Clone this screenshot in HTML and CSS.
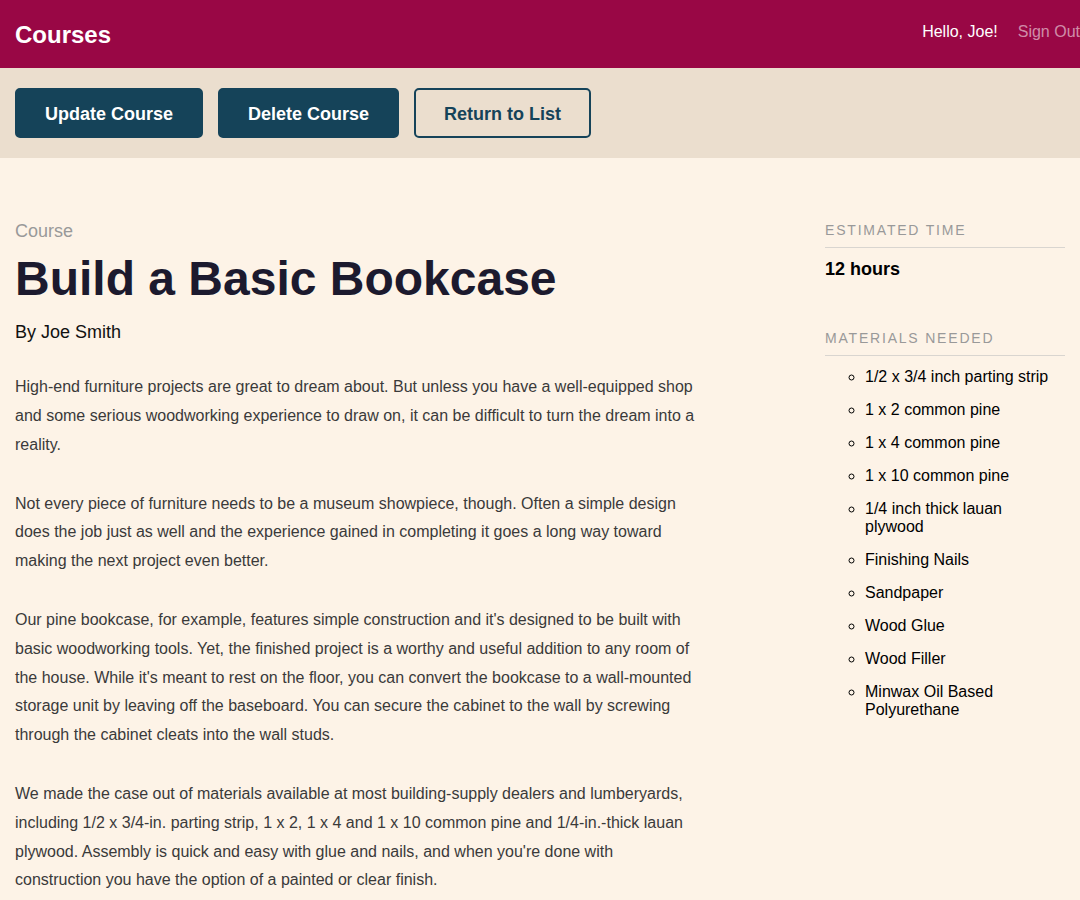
FILE: index.html
```html
<!DOCTYPE html>
<html>
<head>
<meta charset="utf-8">
<title>Courses</title>
<link rel="stylesheet" href="styles.css">
</head>
<body>
<header class="header">
  <div class="header-bar">
    <h1 class="logo">Courses</h1>
    <nav class="nav">
      <span class="greeting">Hello, Joe!</span>
      <a class="signout" href="#">Sign Out</a>
    </nav>
  </div>
</header>
<div class="actions">
  <div class="actions-bar">
    <a class="button" href="#">Update Course</a>
    <a class="button" href="#">Delete Course</a>
    <a class="button button-secondary" href="#">Return to List</a>
  </div>
</div>
<main class="course">
  <div class="course-main">
    <p class="course-label">Course</p>
    <h2 class="course-title">Build a Basic Bookcase</h2>
    <p class="course-author">By Joe Smith</p>
    <div class="course-body">
      <p>High-end furniture projects are great to dream about. But unless you have a well-equipped shop and some serious woodworking experience to draw on, it can be difficult to turn the dream into a reality.</p>
      <p>Not every piece of furniture needs to be a museum showpiece, though. Often a simple design does the job just as well and the experience gained in completing it goes a long way toward making the next project even better.</p>
      <p>Our pine bookcase, for example, features simple construction and it's designed to be built with basic woodworking tools. Yet, the finished project is a worthy and useful addition to any room of the house. While it's meant to rest on the floor, you can convert the bookcase to a wall-mounted storage unit by leaving off the baseboard. You can secure the cabinet to the wall by screwing through the cabinet cleats into the wall studs.</p>
      <p>We made the case out of materials available at most building-supply dealers and lumberyards, including 1/2 x 3/4-in. parting strip, 1 x 2, 1 x 4 and 1 x 10 common pine and 1/4-in.-thick lauan plywood. Assembly is quick and easy with glue and nails, and when you're done with construction you have the option of a painted or clear finish.</p>
    </div>
  </div>
  <aside class="course-side">
    <section class="side-block">
      <h4 class="side-heading">Estimated Time</h4>
      <h3 class="side-time">12 hours</h3>
    </section>
    <section class="side-block">
      <h4 class="side-heading">Materials Needed</h4>
      <ul class="materials">
        <li>1/2 x 3/4 inch parting strip</li>
        <li>1 x 2 common pine</li>
        <li>1 x 4 common pine</li>
        <li>1 x 10 common pine</li>
        <li>1/4 inch thick lauan plywood</li>
        <li>Finishing Nails</li>
        <li>Sandpaper</li>
        <li>Wood Glue</li>
        <li>Wood Filler</li>
        <li>Minwax Oil Based Polyurethane</li>
      </ul>
    </section>
  </aside>
</main>
</body>
</html>
```

FILE: styles.css
```css
* { box-sizing: border-box; }
html, body {
  margin: 0;
  padding: 0;
  background: #fdf3e7;
  font-family: "Liberation Sans", Arial, sans-serif;
  overflow-x: hidden;
}
.header {
  background: #990745;
  height: 68px;
}
.header-bar {
  height: 68px;
  display: flex;
  align-items: center;
  justify-content: space-between;
  padding: 0 0 0 15px;
  white-space: nowrap;
}
.logo {
  margin: 0;
  color: #fff;
  font-size: 24px;
  font-weight: bold;
  position: relative;
  top: 1px;
}
.nav {
  display: flex;
  gap: 20px;
  font-size: 16px;
  margin-right: 0;
  position: relative;
  top: -2px;
}
.greeting { color: #fff; }
.signout {
  color: rgba(255,255,255,0.55);
  text-decoration: none;
}
.actions {
  background: #ebdece;
  height: 90px;
}
.actions-bar {
  display: flex;
  gap: 15px;
  padding: 20px 15px;
}
.button {
  display: inline-flex;
  align-items: center;
  justify-content: center;
  height: 50px;
  padding: 2px 28px 0;
  background: #154359;
  color: #fff;
  border: 2px solid #154359;
  border-radius: 5px;
  font-size: 18px;
  font-weight: bold;
  text-decoration: none;
}
.button-secondary {
  background: #ebdece;
  color: #154359;
}
.course {
  display: grid;
  grid-template-columns: 684px 240px;
  justify-content: space-between;
  padding: 63px 15px 40px;
}
.course-label {
  margin: 0;
  font-size: 18px;
  color: #999;
}
.course-title {
  margin: 9px 0 0;
  font-size: 48px;
  font-weight: bold;
  color: #1c1a2e;
  line-height: 1.15;
}
.course-author {
  margin: 16px 0 0;
  font-size: 18px;
  color: #111;
}
.course-body {
  margin-top: 30px;
}
.course-body p {
  margin: 0 0 30px;
  font-size: 16px;
  line-height: 1.8;
  color: #3a3a3a;
}
.course-side {
  padding-top: 1px;
}
.side-block {
  margin-bottom: 50px;
}
.side-heading {
  margin: 0;
  padding-bottom: 9px;
  border-bottom: 1px solid #d9d5d0;
  font-size: 14px;
  font-weight: normal;
  letter-spacing: 1.8px;
  text-transform: uppercase;
  color: #999;
}
.side-time {
  margin: 11px 0 0;
  font-size: 18px;
  font-weight: bold;
  color: #000;
}
.materials {
  list-style: circle;
  margin: 12px 0 0;
  padding-left: 40px;
  font-size: 16px;
  color: #000;
}
.materials li {
  margin-bottom: 15px;
  line-height: 18px;
}
```
